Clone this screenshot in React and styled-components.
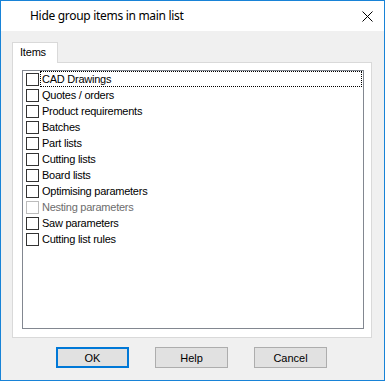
import styled, { createGlobalStyle } from "styled-components";

const GlobalStyle = createGlobalStyle`
  * { box-sizing: border-box; }
  body {
    margin: 0;
    background: #ffffff;
    font-family: "Liberation Sans", Arial, sans-serif;
  }
`;

const Window = styled.div`
  width: 385px;
  height: 381px;
  border: 1px solid #1883d7;
  background: #f0f0f0;
  display: flex;
  flex-direction: column;
`;

const TitleBar = styled.div`
  height: 30px;
  background: #ffffff;
  display: flex;
  align-items: center;
  padding-left: 29px;
  padding-right: 9px;
`;

const Title = styled.div`
  flex: 1;
  font-family: "Noto Sans", "Open Sans", sans-serif;
  font-size: 12px;
  letter-spacing: -0.3px;
  color: #000;
  padding-bottom: 1px;
`;

const CloseButton = styled.div`
  width: 12px;
  height: 12px;
  display: flex;
  align-items: center;
  justify-content: center;
  margin-right: 2px;
`;

const Body = styled.div`
  flex: 1;
  padding: 11px 12px 0 11px;
  display: flex;
  flex-direction: column;
`;

const TabStrip = styled.div`
  display: flex;
  height: 20px;
`;

const Tab = styled.div`
  width: 46px;
  height: 21px;
  background: #ffffff;
  border: 1px solid #d9d9d9;
  border-bottom: none;
  font-size: 11px;
  letter-spacing: -0.2px;
  padding: 3px 0 0 7px;
  color: #000;
  position: relative;
  z-index: 1;
`;

const Panel = styled.div`
  width: 360px;
  height: 276px;
  background: #ffffff;
  border: 1px solid #d9d9d9;
  padding: 7px 7px 8px 9px;
`;

const ListBox = styled.div`
  height: 100%;
  border: 1px solid #828790;
  background: #ffffff;
  display: flex;
  flex-direction: column;
`;

const Row = styled.div`
  display: flex;
  align-items: center;
  height: 16px;
  padding-left: 3px;
  padding-right: 1px;
`;

const Check = styled.div`
  width: 13px;
  height: 13px;
  border: 1px solid ${(p) => (p.$disabled ? "#bcbcbc" : "#333333")};
  background: #ffffff;
  margin-right: 1px;
  flex: none;
`;

const Label = styled.div`
  flex: 1;
  height: 16px;
  line-height: 14px;
  padding-left: 1px;
  font-size: 11px;
  letter-spacing: -0.25px;
  color: ${(p) => (p.$disabled ? "#6d6d6d" : "#000")};
  border: 1px dotted ${(p) => (p.$focused ? "#000" : "transparent")};
  white-space: nowrap;
`;

const ButtonRow = styled.div`
  display: flex;
  justify-content: center;
  gap: 26px;
  margin-top: 9px;
  padding-right: 1px;
`;

const Button = styled.div`
  width: 73px;
  height: 21px;
  background: #e1e1e1;
  border: ${(p) => (p.$default ? "2px solid #0078d7" : "1px solid #adadad")};
  font-size: 11px;
  color: #000;
  display: flex;
  align-items: center;
  justify-content: center;
`;

const items = [
  "CAD Drawings",
  "Quotes / orders",
  "Product requirements",
  "Batches",
  "Part lists",
  "Cutting lists",
  "Board lists",
  "Optimising parameters",
  "Nesting parameters",
  "Saw parameters",
  "Cutting list rules",
];

export default function App() {
  return (
    <Window>
      <GlobalStyle />
      <TitleBar>
        <Title>Hide group items in main list</Title>
        <CloseButton>
          <svg width="11" height="11" viewBox="0 0 11 11">
            <path d="M0.5 0.5 L10.5 10.5 M10.5 0.5 L0.5 10.5" stroke="#000" strokeWidth="1" fill="none" />
          </svg>
        </CloseButton>
      </TitleBar>
      <Body>
        <TabStrip>
          <Tab>Items</Tab>
        </TabStrip>
        <Panel>
          <ListBox>
            {items.map((name, i) => {
              const disabled = name === "Nesting parameters";
              return (
                <Row key={name}>
                  <Check $disabled={disabled} />
                  <Label $focused={i === 0} $disabled={disabled}>
                    {name}
                  </Label>
                </Row>
              );
            })}
          </ListBox>
        </Panel>
        <ButtonRow>
          <Button $default>OK</Button>
          <Button>Help</Button>
          <Button>Cancel</Button>
        </ButtonRow>
      </Body>
    </Window>
  );
}
